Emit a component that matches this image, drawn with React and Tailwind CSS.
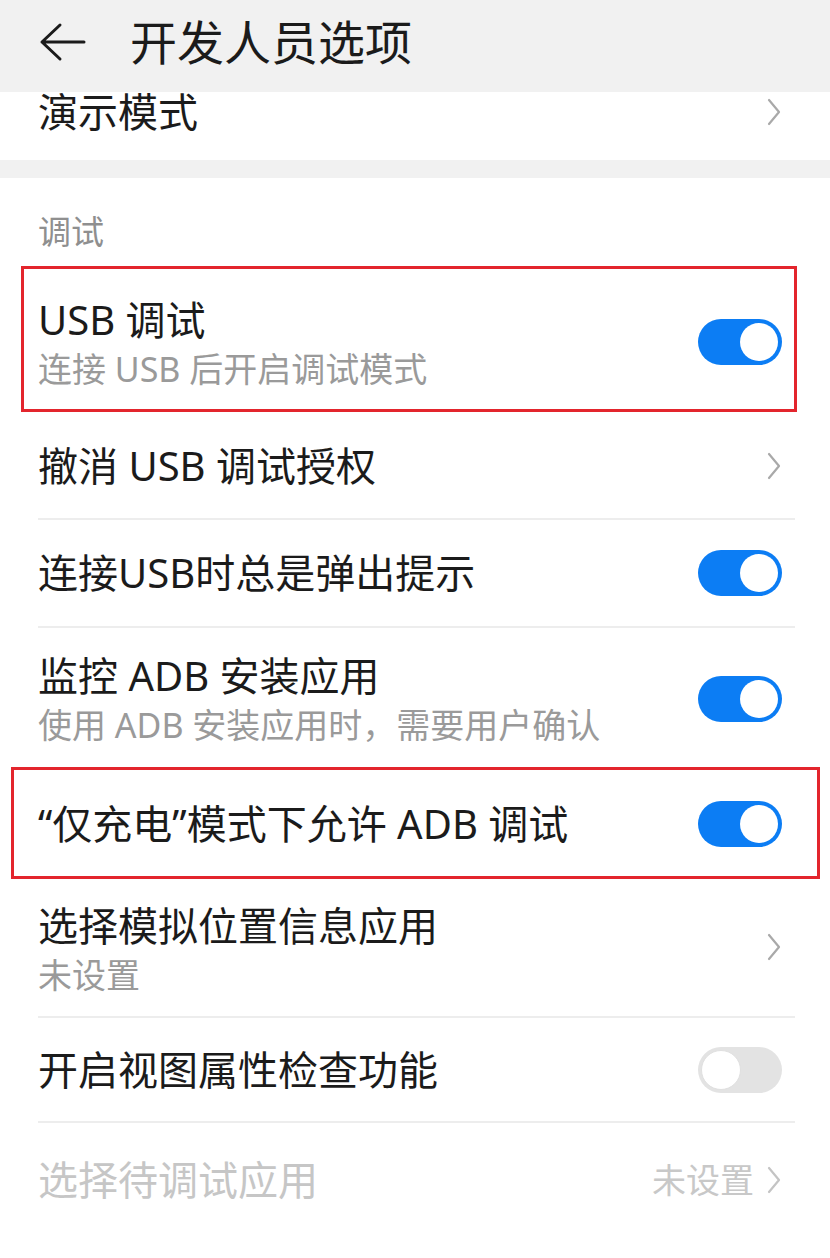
const font = { fontFamily: '"Noto Sans", "Noto Sans CJK SC", sans-serif' }

/* ─── small pieces ─────────────────────────────────────── */
function BackArrow() {
  return (
    <svg width="50" height="40" viewBox="0 0 50 40" className="shrink-0">
      <path
        d="M22 3 L4 20 L22 37 M4 20 H46"
        fill="none"
        stroke="#1b1b1b"
        strokeWidth="3"
        strokeLinecap="round"
        strokeLinejoin="round"
      />
    </svg>
  )
}

function Chevron({ light }) {
  return (
    <svg width="16" height="30" viewBox="0 0 16 30" className="shrink-0">
      <path
        d="M3 3 L13 15 L3 27"
        fill="none"
        stroke={light ? '#c4c4c4' : '#a9a9a9'}
        strokeWidth="2.2"
        strokeLinecap="round"
        strokeLinejoin="round"
      />
    </svg>
  )
}

function Toggle({ on }) {
  if (on) {
    return (
      <div className="w-[84px] h-[46px] rounded-full bg-[#0c7df4] flex items-center justify-end pr-[4px] shrink-0">
        <div className="w-[38px] h-[38px] rounded-full bg-white" />
      </div>
    )
  }
  return (
    <div className="w-[84px] h-[46px] rounded-full bg-[#e3e3e3] flex items-center justify-start pl-[3px] shrink-0">
      <div className="w-[40px] h-[40px] rounded-full bg-white border border-[#e0e0e0]" />
    </div>
  )
}

function Divider() {
  return <div className="ml-[38px] mr-[35px] h-[2px] bg-[#ededed]" />
}

function RedBox({ className }) {
  return <div className={`absolute border-[3px] border-[#e3252d] pointer-events-none ${className}`} />
}

/* ─── rows ─────────────────────────────────────────────── */
function Row({ title, sub, right, h, pt, divider = true, box, dim }) {
  return (
    <div className="relative">
      <div className={`flex items-center pl-[38px] pr-[48px] ${h}`}>
        <div className={`flex-1 flex flex-col ${pt ? `self-start ${pt}` : ''}`}>
          <span className={`text-[40px] leading-[48px] ${dim ? 'text-[#c6c6c6]' : 'text-[#1b1b1b]'}`}>{title}</span>
          {sub && <span className="text-[34px] leading-[40px] mt-[5px] text-[#9a9a9a]">{sub}</span>}
        </div>
        {right}
      </div>
      {divider && <Divider />}
      {box}
    </div>
  )
}

export default function App() {
  return (
    <div className="w-[830px] min-h-[1258px] bg-white overflow-hidden" style={font}>
      {/* Header */}
      <div className="h-[92px] bg-[#f1f1f1] flex items-center pl-[38px]">
        <div className="-mt-[8px]"><BackArrow /></div>
        <span className="ml-[42px] text-[47px] leading-[56px] text-[#1b1b1b] -mt-[8px]">开发人员选项</span>
      </div>

      {/* cut-off row */}
      <div className="h-[68px] flex items-start pl-[38px] pr-[48px]">
        <span className="flex-1 text-[40px] leading-[40px] text-[#1b1b1b]">演示模式</span>
        <div className="h-[40px] flex items-center"><Chevron /></div>
      </div>
      <div className="h-[18px] bg-[#f1f1f1]" />

      {/* Section */}
      <div className="h-[92px] pl-[38px] pt-[34px]">
        <span className="text-[33px] leading-[40px] text-[#8f8f8f]">调试</span>
      </div>

      <Row
        title="USB 调试"
        sub="连接 USB 后开启调试模式"
        h="h-[143px]"
        pt="pt-[26px]"
        right={<Toggle on />}
        divider={false}
        box={<RedBox className="top-[-4px] left-[21px] w-[776px] h-[146px]" />}
      />
      <Row title="撤消 USB 调试授权" h="h-[105px]" right={<Chevron />} />
      <Row title="连接USB时总是弹出提示" h="h-[106px]" right={<Toggle on />} />
      <Row
        title="监控 ADB 安装应用"
        sub="使用 ADB 安装应用时，需要用户确认"
        h="h-[142px]"
        pt="pt-[24px]"
        right={<Toggle on />}
        divider={false}
      />
      <Row
        title="“仅充电”模式下允许 ADB 调试"
        h="h-[108px]"
        right={<Toggle on />}
        divider={false}
        box={<RedBox className="top-[-3px] left-[11px] w-[809px] h-[112px]" />}
      />
      <Row
        title="选择模拟位置信息应用"
        sub="未设置"
        h="h-[138px]"
        pt="pt-[24px]"
        right={<Chevron />}
      />
      <Row title="开启视图属性检查功能" h="h-[103px]" right={<Toggle />} />
      <Row
        title="选择待调试应用"
        h="h-[114px]"
        dim
        divider={false}
        right={
          <div className="flex items-center gap-[12px]">
            <span className="text-[34px] leading-[40px] text-[#c8c8c8]">未设置</span>
            <Chevron light />
          </div>
        }
      />
    </div>
  )
}
